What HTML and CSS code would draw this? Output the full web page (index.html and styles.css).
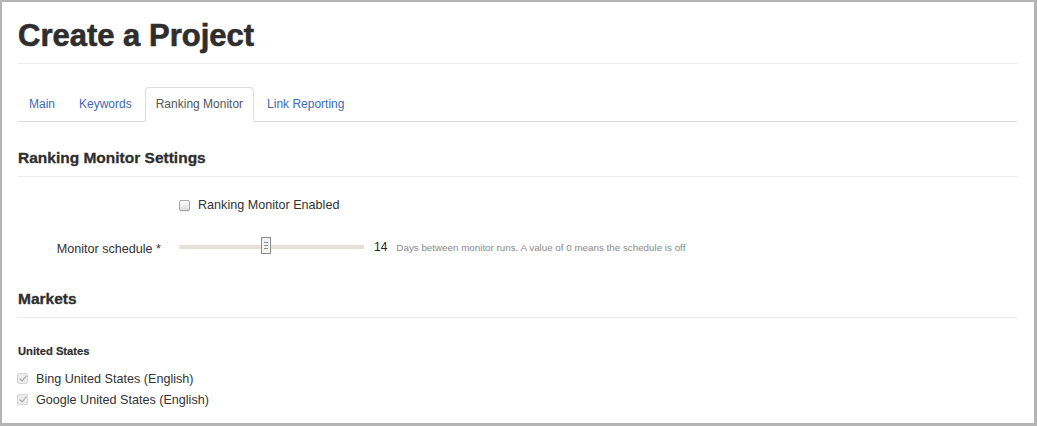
FILE: index.html
```html
<!DOCTYPE html>
<html lang="en">
<head>
    <meta charset="UTF-8">
    <title>Create a Project</title>
    <link rel="stylesheet" href="styles.css">
</head>
<body>
    <div class="frame">
        <h1 class="page-title">Create a Project</h1>

        <ul class="tabs">
            <li><a href="#">Main</a></li>
            <li><a href="#">Keywords</a></li>
            <li class="active"><a href="#">Ranking Monitor</a></li>
            <li><a href="#">Link Reporting</a></li>
        </ul>

        <h2 class="section-title">Ranking Monitor Settings</h2>

        <div class="form-row enabled-row">
            <span class="form-label"></span>
            <label class="check">
                <input type="checkbox">
                Ranking Monitor Enabled
            </label>
        </div>

        <div class="form-row schedule-row">
            <span class="form-label schedule-label">Monitor schedule *</span>
            <div class="slider">
                <div class="slider-thumb" style="left: 44.3%;"><i></i><i></i><i></i></div>
            </div>
            <span class="slider-value">14</span>
            <span class="help">Days between monitor runs. A value of 0 means the schedule is off</span>
        </div>

        <h2 class="section-title markets-title">Markets</h2>

        <h3 class="country">United States</h3>
        <label class="check market">
            <input type="checkbox" checked disabled>
            Bing United States (English)
        </label>
        <label class="check market">
            <input type="checkbox" checked disabled>
            Google United States (English)
        </label>
    </div>
</body>
</html>
```

FILE: styles.css
```css
html, body {
    margin: 0;
    padding: 0;
    background: #ffffff;
}
body {
    font-family: "Liberation Sans", Arial, sans-serif;
    color: #333;
    font-size: 12.6px;
}
.frame {
    box-sizing: border-box;
    width: 1037px;
    height: 426px;
    overflow: hidden;
    border-style: solid;
    border-color: #b4b4b4;
    border-width: 2px 3px 3px 2px;
    padding: 0 17px 0 16px;
}
.page-title {
    margin: 16px 0 0;
    font-size: 31px;
    line-height: 36px;
    font-weight: bold;
    color: #2e2e2e;
    -webkit-text-stroke: 0.6px #2e2e2e;
    padding-bottom: 9px;
    border-bottom: 1px solid #ebebeb;
}
.tabs {
    list-style: none;
    display: flex;
    margin: 23px 0 0;
    padding: 0;
    border-bottom: 1px solid #ddd;
}
.tabs li {
    margin: 0 2px -1px 0;
}
.tabs a {
    display: block;
    padding: 8px 10px;
    font-size: 12px;
    line-height: 17px;
    color: #3d6bb3;
    text-decoration: none;
    border: 1px solid transparent;
    border-radius: 4px 4px 0 0;
}
.tabs .active a {
    color: #555;
    background: #fff;
    border-color: #ddd #ddd transparent;
}
.section-title {
    margin: 26px 0 0;
    font-size: 15.5px;
    line-height: 20px;
    font-weight: bold;
    color: #2e2e2e;
    -webkit-text-stroke: 0.3px #2e2e2e;
    padding-bottom: 8px;
    border-bottom: 1px solid #ebebeb;
}
.form-row {
    display: flex;
    align-items: center;
    height: 20px;
}
.enabled-row {
    margin-top: 18px;
}
.schedule-row {
    margin-top: 22px;
}
.form-label {
    width: 143px;
    margin-right: 18px;
    text-align: right;
    flex: none;
}
.schedule-label {
    padding-top: 3px;
}
.check {
    display: flex;
    align-items: center;
}
.check input {
    -webkit-appearance: none;
    appearance: none;
    box-sizing: border-box;
    width: 11px;
    height: 11px;
    margin: 0 8px 0 0;
    border: 1px solid #a9a9a9;
    border-radius: 2px;
    background: linear-gradient(#fdfdfd, #dcdcdc);
    box-shadow: 0 1px 1px rgba(0, 0, 0, 0.08);
    position: relative;
}
.check input:checked:disabled {
    border-color: #d6d6d6;
    background: #ececec;
    box-shadow: none;
}
.check input:checked::after {
    content: "";
    position: absolute;
    left: 3px;
    top: 0px;
    width: 3px;
    height: 6px;
    border: solid #a0a0a0;
    border-width: 0 1.5px 1.5px 0;
    transform: rotate(40deg);
}
.slider {
    position: relative;
    width: 185px;
    height: 4px;
    background: #e4dfd8;
    flex: none;
}
.slider-thumb {
    position: absolute;
    top: -8px;
    box-sizing: border-box;
    width: 10px;
    height: 17px;
    border: 1px solid #8c8c8c;
    background: #f3f3f1;
    display: flex;
    flex-direction: column;
    align-items: center;
    justify-content: center;
    gap: 2px;
}
.slider-thumb i {
    display: block;
    width: 4px;
    height: 1px;
    background: #8c8c8c;
}
.slider-value {
    margin-left: 10px;
    font-size: 12px;
    color: #222;
}
.help {
    margin-left: 9px;
    font-size: 9.8px;
    color: #8a8a8a;
}
.markets-title {
    margin-top: 32px;
}
.country {
    margin: 25px 0 0;
    font-size: 11.2px;
    line-height: 16px;
    font-weight: bold;
    color: #2e2e2e;
    -webkit-text-stroke: 0.2px #2e2e2e;
}
.market {
    height: 21px;
    margin-left: -1px;
}
.market:first-of-type {
    margin-top: 9px;
}
```
